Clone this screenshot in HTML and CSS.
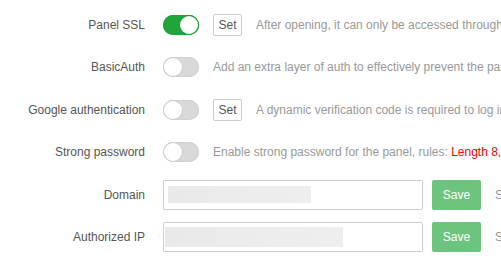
FILE: index.html
```html
<!DOCTYPE html>
<html>
<head>
<meta charset="utf-8">
<link rel="stylesheet" href="styles.css">
</head>
<body>
<div class="form">
  <div class="row">
    <div class="label">Panel SSL</div>
    <span class="toggle on"><span class="knob"></span></span>
    <button class="set">Set</button>
    <span class="desc">After opening, it can only be accessed through https protocol</span>
  </div>
  <div class="row">
    <div class="label">BasicAuth</div>
    <span class="toggle"><span class="knob"></span></span>
    <span class="desc">Add an extra layer of auth to effectively prevent the panel from being scanned</span>
  </div>
  <div class="row">
    <div class="label">Google authentication</div>
    <span class="toggle"><span class="knob"></span></span>
    <button class="set">Set</button>
    <span class="desc">A dynamic verification code is required to log in</span>
  </div>
  <div class="row">
    <div class="label">Strong password</div>
    <span class="toggle"><span class="knob"></span></span>
    <span class="desc">Enable strong password for the panel, rules: <span class="red">Length 8, contain digits, letters</span></span>
  </div>
  <div class="row">
    <div class="label">Domain</div>
    <div class="input"><span class="blur b1"></span></div>
    <button class="save">Save</button>
    <span class="desc tail">Set the domain</span>
  </div>
  <div class="row">
    <div class="label">Authorized IP</div>
    <div class="input"><span class="blur b2"></span></div>
    <button class="save">Save</button>
    <span class="desc tail">Set the IP</span>
  </div>
</div>
</body>
</html>
```
FILE: styles.css
```css
html, body {
  margin: 0;
  padding: 0;
  background: #fff;
  overflow: hidden;
}
body {
  font-family: "Liberation Sans", Arial, sans-serif;
  font-size: 12px;
  color: #555;
  width: 501px;
  height: 261px;
}
.form {
  padding-top: 10px;
  display: flex;
  flex-direction: column;
  gap: 12.4px;
}
.row {
  display: flex;
  align-items: center;
  height: 30px;
  white-space: nowrap;
}
.label {
  width: 145px;
  flex: none;
  text-align: right;
  margin-right: 18px;
  color: #555;
}
.toggle {
  flex: none;
  position: relative;
  width: 36px;
  height: 20px;
  border-radius: 10px;
  background: #d9d9d9;
  box-shadow: inset 0 0 0 1px #d0d0d0;
}
.toggle .knob {
  position: absolute;
  top: 1px;
  left: 1px;
  width: 18px;
  height: 18px;
  border-radius: 50%;
  background: #fff;
  box-shadow: 0 0 0 1px #cfcfcf;
}
.toggle.on {
  background: #20a53a;
  box-shadow: inset 0 0 0 1px #20a53a;
}
.toggle.on .knob {
  left: 17px;
  box-shadow: 0 0 0 1px #1e9a36;
}
.set {
  flex: none;
  margin-left: 14px;
  height: 22px;
  width: 29px;
  padding: 0;
  border: 1px solid #ccc;
  border-radius: 2px;
  background: #fff;
  color: #555;
  font-family: inherit;
  font-size: 12px;
}
.desc {
  margin-left: 14px;
  color: #999;
}
.red {
  color: #f00;
}
.input {
  flex: none;
  width: 260px;
  height: 30px;
  box-sizing: border-box;
  border: 1px solid #ccc;
  border-radius: 2px;
  display: flex;
  align-items: center;
}
.blur {
  display: block;
  background: linear-gradient(90deg, #e9e9e9, #ececec 50%, #eeeeee);
  filter: blur(0.5px);
}
.b1 {
  margin-left: 4px;
  width: 143px;
  height: 17px;
}
.b2 {
  margin-left: 1px;
  width: 178px;
  height: 20px;
}
.save {
  flex: none;
  margin-left: 9px;
  width: 49px;
  height: 30px;
  padding: 0;
  border: none;
  border-radius: 2px;
  background: #6cc47f;
  color: #fff;
  font-family: inherit;
  font-size: 12px;
}
.tail {
  margin-left: 14px;
}
```
